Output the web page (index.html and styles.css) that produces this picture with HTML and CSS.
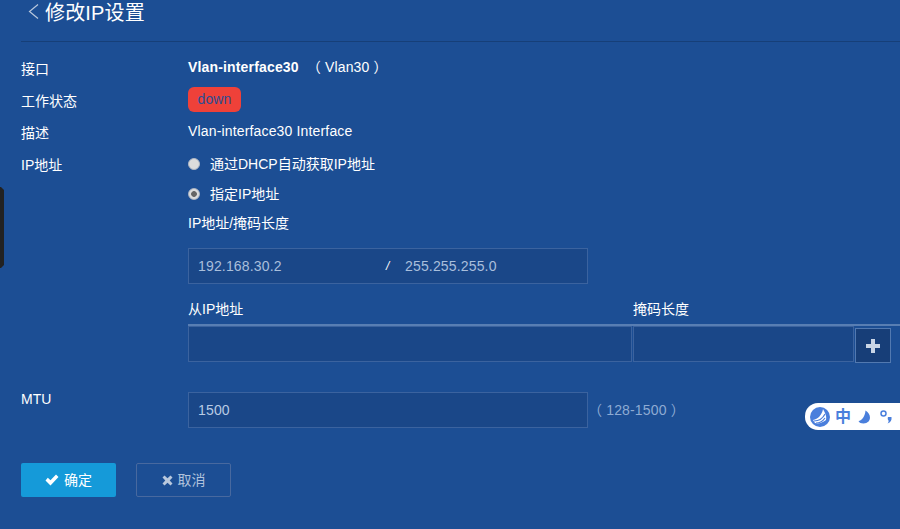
FILE: index.html
```html
<!DOCTYPE html>
<html lang="zh">
<head>
<meta charset="utf-8">
<title>修改IP设置</title>
<link rel="stylesheet" href="styles.css">
</head>
<body>
<div class="side-tab"></div>
<header class="head">
  <svg class="back" width="11" height="15" viewBox="0 0 11 15"><path d="M10 .5 L1.500 7.500 L10 14.500" fill="none" stroke="#b9c8dd" stroke-width="1.200"/></svg>
  <h1 class="title">修改IP设置</h1>
</header>
<main class="form">
  <div class="row"><div class="label">接口</div><div class="value latin"><b class="strong">Vlan-interface30</b><span class="alias">（ Vlan30 ）</span></div></div>
  <div class="row"><div class="label">工作状态</div><div class="value latin"><span class="badge">down</span></div></div>
  <div class="row"><div class="label">描述</div><div class="value latin">Vlan-interface30 Interface</div></div>
  <div class="row ip-row">
    <div class="label">IP地址</div>
    <div class="value ip-col">
      <label class="radio-line"><span class="radio"></span>通过DHCP自动获取IP地址</label>
      <label class="radio-line"><span class="radio on"></span>指定IP地址</label>
      <div class="sub-title">IP地址/掩码长度</div>
      <div class="input ip-input latin"><span class="ip-part">192.168.30.2</span><span class="slash">/</span><span class="mask-part">255.255.255.0</span></div>
      <div class="table-head"><span class="th-a">从IP地址</span><span>掩码长度</span></div>
      <div class="table-body">
        <div class="input cell-a"></div>
        <div class="input cell-b"></div>
        <button class="add" type="button" aria-label="添加"><svg width="14" height="14" viewBox="0 0 14 14"><path d="M5 0h4v5h5v4H9v5H5V9H0V5h5z" fill="#c9d5e6"/></svg></button>
      </div>
    </div>
  </div>
  <div class="row mtu-row">
    <div class="label">MTU</div>
    <div class="value mtu-val latin"><div class="input mtu-input">1500</div><span class="hint">（ 128-1500 ）</span></div>
  </div>
  <div class="actions">
    <button class="btn primary" type="button"><svg width="14" height="12" viewBox="0 0 14 12"><path d="M.5 6.500 L2.800 3.800 L5.500 6.300 L11 .5 L13.500 3 L5.500 11.500z" fill="#fff"/></svg>确定</button>
    <button class="btn ghost" type="button"><svg width="11" height="11" viewBox="0 0 11 11"><path d="M2.500 .5 L5.500 3.300 L8.500 .5 L10.500 2.500 L7.700 5.500 L10.500 8.500 L8.500 10.500 L5.500 7.700 L2.500 10.500 L.5 8.500 L3.300 5.500 L.5 2.500z" fill="#b9c8dd"/></svg>取消</button>
  </div>
</main>
<div class="ime">
  <svg class="ime-logo" width="20" height="20" viewBox="0 0 20 20"><circle cx="10" cy="10" r="10" fill="#4a7fdc"/><path d="M3 13 C8 12 12 8 13 2 C15 6 17 9 16 13 C12 16 8 17 5 16z" fill="#fff"/><path d="M4 14 C9 14 13 11 15 7 M6 16 C10 16 13 14 15 11" fill="none" stroke="#4a7fdc" stroke-width="1.200"/></svg>
  <span class="ime-zh">中</span>
  <svg class="ime-moon" width="13" height="14" viewBox="0 0 13 14"><path d="M7.500 .5 C14 4 13.500 13.500 5.500 13.500 C3 13.500 1.500 12.800 .5 11 C4 10.500 7 6.500 7.500 .5z" fill="#4a7fdc"/></svg>
  <svg class="ime-punct" width="14" height="16" viewBox="0 0 14 16"><circle cx="4.500" cy="4.500" r="2.500" fill="none" stroke="#4a7fdc" stroke-width="1.500"/><path d="M9 8 h3.500 c.5 3 -.8 5.500 -4 6.500 c1 -1.200 1.300 -2.200 1 -3 c-1 -.7 -.9 -2.500 -.5 -3.500z" fill="#4a7fdc"/></svg>
</div>
</body>
</html>
```
FILE: styles.css
```css
* { box-sizing: border-box; }
html, body { margin: 0; height: 100%; }
body {
  width: 900px;
  height: 529px;
  overflow: hidden;
  position: relative;
  background: #1c4e94;
  color: #fff;
  font: 14px/20px "Liberation Sans", "Noto Sans CJK SC", sans-serif;
  padding-left: 21px;
}
.latin { letter-spacing: .16px; }
.head {
  height: 42px;
  border-bottom: 1px solid #163f78;
  display: flex;
  align-items: flex-start;
  gap: 6px;
  padding-left: 7px;
}
.back { margin-top: 4px; }
.title {
  margin: 0;
  font-size: 20px;
  font-weight: 400;
  line-height: 24px;
  letter-spacing: .15px;
  padding-top: 1px;
}
.form { padding-top: 15px; }
.row { display: flex; }
.label { width: 167px; flex: none; padding-top: 2px; }
.row > .value { height: 32px; }
.row.ip-row > .value { height: auto; }
.alias { margin-left: 8px; }
.strong { font-weight: 700; }
.badge {
  display: block;
  width: 53px;
  height: 25px;
  margin-top: -2px;
  background: #ef4139;
  border-radius: 6px;
  color: #2c4d92;
  text-align: center;
  line-height: 24px;
}
.ip-col { width: 712px; margin-top: -4px; }
.radio-line { display: flex; align-items: center; height: 30px; }
.radio {
  width: 12px;
  height: 12px;
  border-radius: 50%;
  background: #dcdcdc;
  margin-right: 10px;
  border: 1px solid #aeb6c4;
  flex: none;
}
.radio.on { background: radial-gradient(circle, #666 0 2.500px, #dcdcdc 3.200px); }
.sub-title { height: 25px; line-height: 28px; }
.input {
  background: #1a4788;
  border: 1px solid #3b639f;
  height: 36px;
}
.ip-input {
  width: 400px;
  margin-top: 14px;
  display: flex;
  align-items: center;
  padding-left: 9px;
  color: #a9bfdc;
}
.ip-part { width: 188px; }
.slash { width: 19px; color: #fff; font-style: italic; font-size: 12px; }
.table-head {
  display: flex;
  height: 28px;
  margin-top: 12px;
  padding-top: 3px;
}
.th-a { width: 445px; }
.table-body {
  display: flex;
  align-items: flex-start;
  border-top: 2px solid #587eb3;
  height: 37px;
}
.cell-a { width: 444px; margin-right: 1px; }
.cell-b { width: 221px; }
.add {
  width: 36px;
  height: 35px;
  margin-left: 1px;
  margin-top: 2px;
  padding: 0;
  background: #173e78;
  border: 1px solid #5279b0;
  display: flex;
  align-items: center;
  justify-content: center;
}
.mtu-row { margin-top: 31px; }
.mtu-val { display: flex; align-items: center; height: 36px !important; }
.mtu-row .label { margin-top: -5px; }
.mtu-input {
  width: 400px;
  padding-left: 9px;
  line-height: 34px;
  color: #b8cbe4;
}
.hint { color: #8eabd3; }
.actions { display: flex; gap: 20px; margin-top: 35px; }
.btn {
  width: 95px;
  height: 34px;
  border-radius: 2px;
  font: inherit;
  display: flex;
  align-items: center;
  justify-content: center;
  gap: 5px;
  padding: 0;
}
.primary { background: #159ad9; color: #fff; border: 0; }
.ghost { background: transparent; color: #b0c2dc; border: 1px solid #48699f; }
.side-tab {
  position: absolute;
  left: 0;
  top: 187px;
  width: 4px;
  height: 81px;
  background: #222;
  clip-path: polygon(0 0, 1px 0, 100% 3px, 100% calc(100% - 3px), 1px 100%, 0 100%);
}
.ime {
  position: absolute;
  left: 805px;
  top: 403px;
  width: 95px;
  height: 27px;
  background: #fff;
  border-radius: 13px 0 0 13px;
  display: flex;
  align-items: center;
  padding-left: 5px;
}
.ime-zh { color: #4a7fdc; font-size: 16px; font-weight: 700; line-height: 20px; width: 16px; margin-left: 5px; }
.ime-moon { margin-left: 7px; }
.ime-punct { margin-left: 8px; }
```
